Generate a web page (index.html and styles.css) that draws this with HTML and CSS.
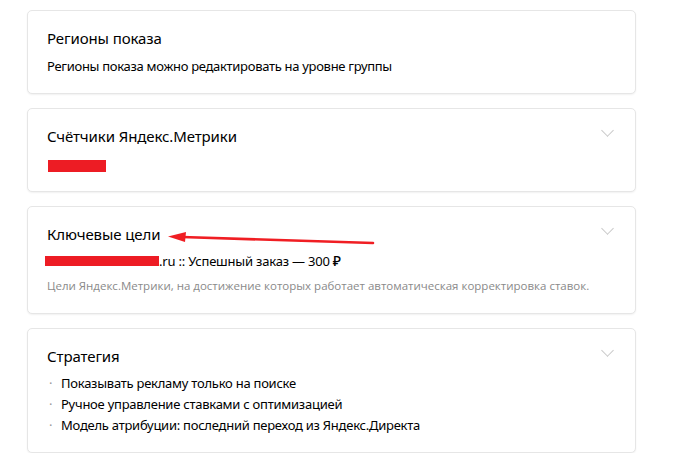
FILE: index.html
```html
<!DOCTYPE html>
<html lang="ru">
<head>
<meta charset="utf-8">
<title>Настройки кампании</title>
<link rel="stylesheet" href="styles.css">
</head>
<body>
<div class="page">
  <section class="card card-regions">
    <h2 class="card-title">Регионы показа</h2>
    <p class="card-text">Регионы показа можно редактировать на уровне группы</p>
  </section>

  <section class="card card-counters">
    <h2 class="card-title">Счётчики Яндекс.Метрики</h2>
    <div class="counter-line"><span class="redact redact-counter"></span></div>
    <span class="chevron"></span>
  </section>

  <section class="card card-goals">
    <h2 class="card-title">Ключевые цели</h2>
    <p class="goal-line"><span class="redact redact-goal"></span>.ru :: Успешный заказ — 300 <span class="rub">₽</span></p>
    <p class="card-hint">Цели Яндекс.Метрики, на достижение которых работает автоматическая корректировка ставок.</p>
    <span class="chevron"></span>
  </section>

  <section class="card card-strategy">
    <h2 class="card-title">Стратегия</h2>
    <ul class="bullets">
      <li>Показывать рекламу только на поиске</li>
      <li>Ручное управление ставками с оптимизацией</li>
      <li>Модель атрибуции: последний переход из Яндекс.Директа</li>
    </ul>
    <span class="chevron"></span>
  </section>

  <svg class="arrow" width="220" height="20" viewBox="0 0 220 20">
    <line x1="16" y1="8" x2="207" y2="14" stroke="#f01e23" stroke-width="2.6" stroke-linecap="round"/>
    <polygon points="2,7.5 20,3 19,13" fill="#f01e23"/>
  </svg>
</div>
</body>
</html>
```

FILE: styles.css
```css
* { box-sizing: border-box; }

html, body {
  margin: 0;
  padding: 0;
  background: #ffffff;
}

body {
  font-family: "Noto Sans", "Open Sans", Arial, sans-serif;
  color: #000000;
}

.page {
  position: relative;
  width: 674px;
  padding: 10px 0 0 27px;
  display: flex;
  flex-direction: column;
  gap: 14px;
}

.card {
  position: relative;
  width: 609px;
  border: 1px solid #e6e6e6;
  border-radius: 5px;
  box-shadow: 0 1px 2px rgba(0, 0, 0, 0.06);
  background: #fff;
  padding: 17px 20px 0 19px;
}

.card-title {
  margin: 0;
  font-size: 15px;
  line-height: 20px;
  font-weight: 400;
  letter-spacing: -0.1px;
}

.card-text {
  margin: 8px 0 0;
  font-size: 13px;
  line-height: 20px;
  letter-spacing: -0.3px;
}

.card-regions { height: 84px; }
.card-counters { height: 84px; }
.card-goals { height: 108px; }
.card-strategy { height: 125px; }

.counter-line {
  margin-top: 9px;
  height: 12px;
}

.redact {
  display: inline-block;
  background: #ed1c24;
}

.redact-counter {
  width: 58px;
  height: 12px;
  margin-left: 1px;
}

.goal-line {
  margin: 7px 0 0;
  font-size: 13px;
  line-height: 20px;
  letter-spacing: -0.2px;
  display: flex;
  align-items: center;
  white-space: pre;
}

.rub {
  font-size: 14px;
  font-weight: 500;
}

.redact-goal {
  width: 114px;
  height: 10px;
  margin-left: -2px;
  margin-top: -1px;
}

.card-hint {
  margin: 6px 0 0;
  font-family: "Open Sans", "Noto Sans", sans-serif;
  font-size: 11.5px;
  line-height: 18px;
  color: #8a8a8a;
}

.bullets {
  list-style: none;
  margin: 7px 0 0;
  padding: 0;
}

.bullets li {
  position: relative;
  padding-left: 14px;
  font-size: 13px;
  line-height: 21px;
  letter-spacing: -0.25px;
}

.bullets li::before {
  content: "·";
  position: absolute;
  left: 2px;
  top: 0;
  color: #999;
}

.chevron {
  position: absolute;
  top: 17px;
  right: 23px;
  width: 9px;
  height: 9px;
  border-right: 1px solid #c9c9c9;
  border-bottom: 1px solid #c9c9c9;
  transform: rotate(45deg);
}

.arrow {
  position: absolute;
  left: 166px;
  top: 229px;
}
```
